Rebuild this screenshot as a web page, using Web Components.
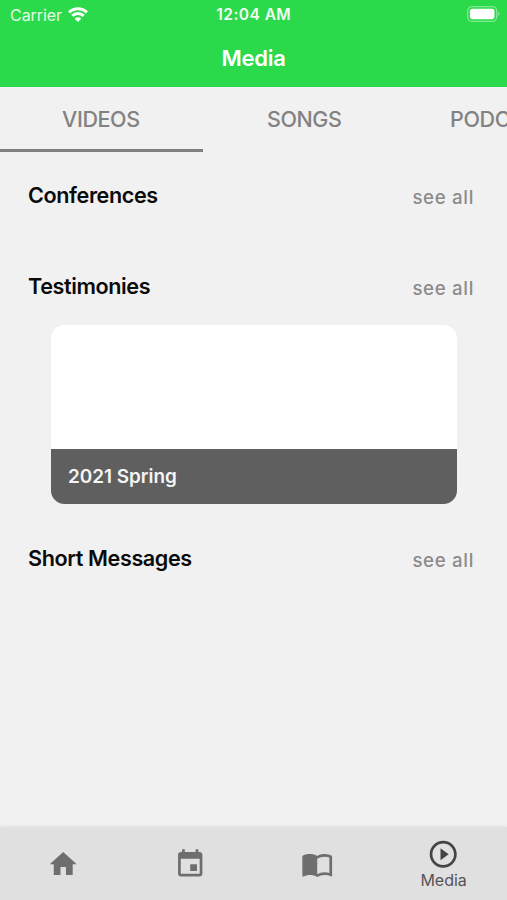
<!DOCTYPE html>
<html lang="en">
<head>
<meta charset="utf-8">
<meta name="viewport" content="width=device-width, initial-scale=1">
<title>Media</title>
<style>
  html, body {
    margin: 0;
    height: 100%;
    overflow: hidden;
    background: #f1f1f1;
    font-family: Inter, Roboto, sans-serif;
  }
</style>
</head>
<body>

<media-app>
  <status-bar slot="top" carrier="Carrier" time="12:04 AM"></status-bar>
  <nav-header slot="top">Media</nav-header>

  <tab-strip slot="top">
    <tab-item active>VIDEOS</tab-item>
    <tab-item>SONGS</tab-item>
    <tab-item>PODCASTS</tab-item>
  </tab-strip>

  <media-section heading="Conferences"></media-section>
  <media-section heading="Testimonies">
    <media-card>2021 Spring</media-card>
  </media-section>
  <media-section heading="Short Messages"></media-section>

  <bottom-nav slot="bottom">
    <nav-item icon="home"></nav-item>
    <nav-item icon="event"></nav-item>
    <nav-item icon="book"></nav-item>
    <nav-item icon="play" active>Media</nav-item>
  </bottom-nav>
</media-app>

<script>
(function () {
  const ICONS = {
    home: "M10 20v-6h4v6h5v-8h3L12 3 2 12h3v8z",
    event:
      "M17 12h-5v5h5v-5zM16 1v2H8V1H6v2H5c-1.11 0-1.99.9-1.99 2L3 19c0 1.1.89 2 2 2h14c1.1 0 2-.9 2-2V5c0-1.1-.9-2-2-2h-1V1h-2zm3 18H5V8h14v11z",
    book:
      "M21 5c-1.11-.35-2.33-.5-3.5-.5-1.95 0-4.05.4-5.5 1.5-1.45-1.1-3.55-1.5-5.5-1.5S2.45 4.9 1 6v14.65c0 .25.25.5.5.5.1 0 .15-.05.25-.05C3.1 20.45 5.05 20 6.5 20c1.95 0 4.05.4 5.5 1.5 1.35-.85 3.8-1.5 5.5-1.5 1.65 0 3.35.3 4.75 1.05.1.05.15.05.25.05.25 0 .5-.25.5-.5V6c-.6-.45-1.25-.75-2-1zm0 13.5c-1.1-.35-2.3-.5-3.5-.5-1.7 0-4.15.65-5.5 1.5V8c1.35-.85 3.8-1.5 5.5-1.5 1.2 0 2.4.15 3.5.5v11.5z",
    play:
      "M10 16.5l6-4.5-6-4.5v9zM12 2C6.48 2 2 6.48 2 12s4.48 10 10 10 10-4.48 10-10S17.52 2 12 2zm0 18c-4.41 0-8-3.59-8-8s3.59-8 8-8 8 3.59 8 8-3.59 8-8 8z",
  };

  class MediaApp extends HTMLElement {
    constructor() {
      super();
      this.attachShadow({ mode: "open" });
      this.shadowRoot.innerHTML = `
        <style>
        :host{
            display:flex;
            flex-direction:column;
            height:100vh;
            overflow:hidden;
        }
        main{
            flex:1;
            min-height:0;
            overflow:hidden;
        }
        </style>
        <slot name="top"></slot>
        <main><slot></slot></main>
        <slot name="bottom"></slot>
        `;
    }
  }

  class StatusBar extends HTMLElement {
    constructor() {
      super();
      this.attachShadow({ mode: "open" });
    }

    connectedCallback() {
      this.shadowRoot.innerHTML = `
        <style>
        :host{
            display:grid;
            grid-template-columns:1fr auto 1fr;
            align-items:center;
            height:30px;
            flex:none;
            padding:0 7.5px 0 10px;
            box-sizing:border-box;
            background:#2bda4a;
            color:#fff;
            font-size:16px;
            line-height:20px;
        }
        .left{
            display:flex;
            align-items:center;
            gap:6px;
        }
        .carrier{
            letter-spacing:-.05px;
            opacity:.88;
        }
        .time{
            margin-right:2px;
            font-weight:600;
            font-size:15.6px;
            letter-spacing:.4px;
            opacity:.94;
        }
        .battery{
            justify-self:end;
            margin-bottom:2px;
        }
        svg{
            display:block;
        }
        .wifi{
            margin-bottom:1px;
        }
        </style>
        <div class="left">
            <span class="carrier">${this.getAttribute("carrier")}</span>
            <svg class="wifi" width="20" height="15" viewBox="0 0 20 15" fill="none" stroke="#fff" stroke-width="3">
                <path d="M1.1 5.3a12.8 12.8 0 0 1 17.8 0"/>
                <path d="M4.3 8.9a8.2 8.2 0 0 1 11.4 0"/>
                <path d="M10 14.9L6.7 11.7a4.6 4.6 0 0 1 6.6 0z" fill="#fff" stroke="none"/>
            </svg>
        </div>
        <span class="time">${this.getAttribute("time")}</span>
        <svg class="battery" width="33" height="16" viewBox="0 0 33 16">
            <rect x=".7" y=".7" width="29" height="14.6" rx="4.2" fill="none" stroke="#fff" stroke-opacity=".42" stroke-width="1.3"/>
            <rect x="2.9" y="2.8" width="24.6" height="10.4" rx="2.4" fill="#fff"/>
            <path d="M31.2 5.8q1.4 1 1.4 2.2t-1.4 2.2z" fill="#fff" fill-opacity=".42"/>
        </svg>
        `;
    }
  }

  class NavHeader extends HTMLElement {
    constructor() {
      super();
      this.attachShadow({ mode: "open" });
      this.shadowRoot.innerHTML = `
        <style>
        :host{
            display:flex;
            flex:none;
            align-items:center;
            justify-content:center;
            height:57px;
            box-sizing:border-box;
            padding-bottom:1px;
            background:#2bda4a;
            color:#fff;
            font-size:22px;
            font-weight:600;
            letter-spacing:-.25px;
        }
        </style>
        <span><slot></slot></span>
        `;
    }
  }

  class TabStrip extends HTMLElement {
    constructor() {
      super();
      this.attachShadow({ mode: "open" });
      this.shadowRoot.innerHTML = `
        <style>
        :host{
            display:flex;
            flex:none;
            height:65px;
            overflow:hidden;
        }
        </style>
        <slot></slot>
        `;
    }
  }

  class TabItem extends HTMLElement {
    constructor() {
      super();
      this.attachShadow({ mode: "open" });
      this.shadowRoot.innerHTML = `
        <style>
        :host{
            display:flex;
            flex:none;
            width:203.3px;
            height:65px;
            padding:2px 1.5px 0 0;
            box-sizing:border-box;
            align-items:center;
            justify-content:center;
            color:#828282;
            font-size:21.5px;
            font-weight:450;
            letter-spacing:-.4px;
            border-bottom:3px solid transparent;
        }
        :host([active]){
            border-bottom-color:#808080;
        }
        </style>
        <span><slot></slot></span>
        `;
    }
  }

  class MediaSection extends HTMLElement {
    constructor() {
      super();
      this.attachShadow({ mode: "open" });
    }

    connectedCallback() {
      this.shadowRoot.innerHTML = `
        <style>
        :host{
            display:block;
            padding:20px 0 10px;
        }
        header{
            display:flex;
            align-items:center;
            justify-content:space-between;
            height:46px;
            padding:0 33px 0 28px;
        }
        h2{
            margin:0;
            font-size:21.6px;
            font-weight:600;
            letter-spacing:-.4px;
            color:#0b0b0b;
        }
        .all{
            padding-top:5px;
            font-size:18.7px;
            font-weight:500;
            letter-spacing:.65px;
            color:#8c8c8c;
        }
        .content{
            padding:15px 50.5px 0 51px;
        }
        ::slotted(media-card){
            margin:1px 0;
        }
        </style>
        <header>
            <h2>${this.getAttribute("heading")}</h2>
            <span class="all">see all</span>
        </header>
        <div class="content"><slot></slot></div>
        `;
    }
  }

  class MediaCard extends HTMLElement {
    constructor() {
      super();
      this.attachShadow({ mode: "open" });
      this.shadowRoot.innerHTML = `
        <style>
        :host{
            display:flex;
            flex-direction:column;
            height:178.5px;
            border-radius:13.5px;
            overflow:hidden;
        }
        .picture{
            flex:1;
            background:#fff;
        }
        .caption{
            display:flex;
            align-items:center;
            height:55px;
            padding:0 17px;
            background:#5f5f5f;
            color:#f5f5f5;
            font-size:18.9px;
            font-weight:600;
        }
        </style>
        <div class="picture"></div>
        <div class="caption"><slot></slot></div>
        `;
    }
  }

  class BottomNav extends HTMLElement {
    constructor() {
      super();
      this.attachShadow({ mode: "open" });
      this.shadowRoot.innerHTML = `
        <style>
        :host{
            display:flex;
            flex:none;
            height:73px;
            background:#e0e0e0;
            box-shadow:0 -1px 3px rgba(0,0,0,.07);
        }
        </style>
        <slot></slot>
        `;
    }
  }

  class NavItem extends HTMLElement {
    constructor() {
      super();
      this.attachShadow({ mode: "open" });
    }

    connectedCallback() {
      this.shadowRoot.innerHTML = `
        <style>
        :host{
            display:flex;
            flex:1;
            flex-direction:column;
            align-items:center;
            justify-content:center;
            padding-top:1px;
            color:#6e6e6e;
            font-size:16px;
            line-height:19px;
        }
        :host([active]){
            color:#444;
        }
        svg{
            display:block;
            fill:currentColor;
        }
        span{
            color:#555;
        }
        </style>
        <svg width="32.45" height="32.45" viewBox="0 0 24 24">
            <path d="${ICONS[this.getAttribute("icon")]}"/>
        </svg>
        <span><slot></slot></span>
        `;
    }
  }

  customElements.define("media-app", MediaApp);
  customElements.define("status-bar", StatusBar);
  customElements.define("nav-header", NavHeader);
  customElements.define("tab-strip", TabStrip);
  customElements.define("tab-item", TabItem);
  customElements.define("media-section", MediaSection);
  customElements.define("media-card", MediaCard);
  customElements.define("bottom-nav", BottomNav);
  customElements.define("nav-item", NavItem);
})();
</script>
</body>
</html>
